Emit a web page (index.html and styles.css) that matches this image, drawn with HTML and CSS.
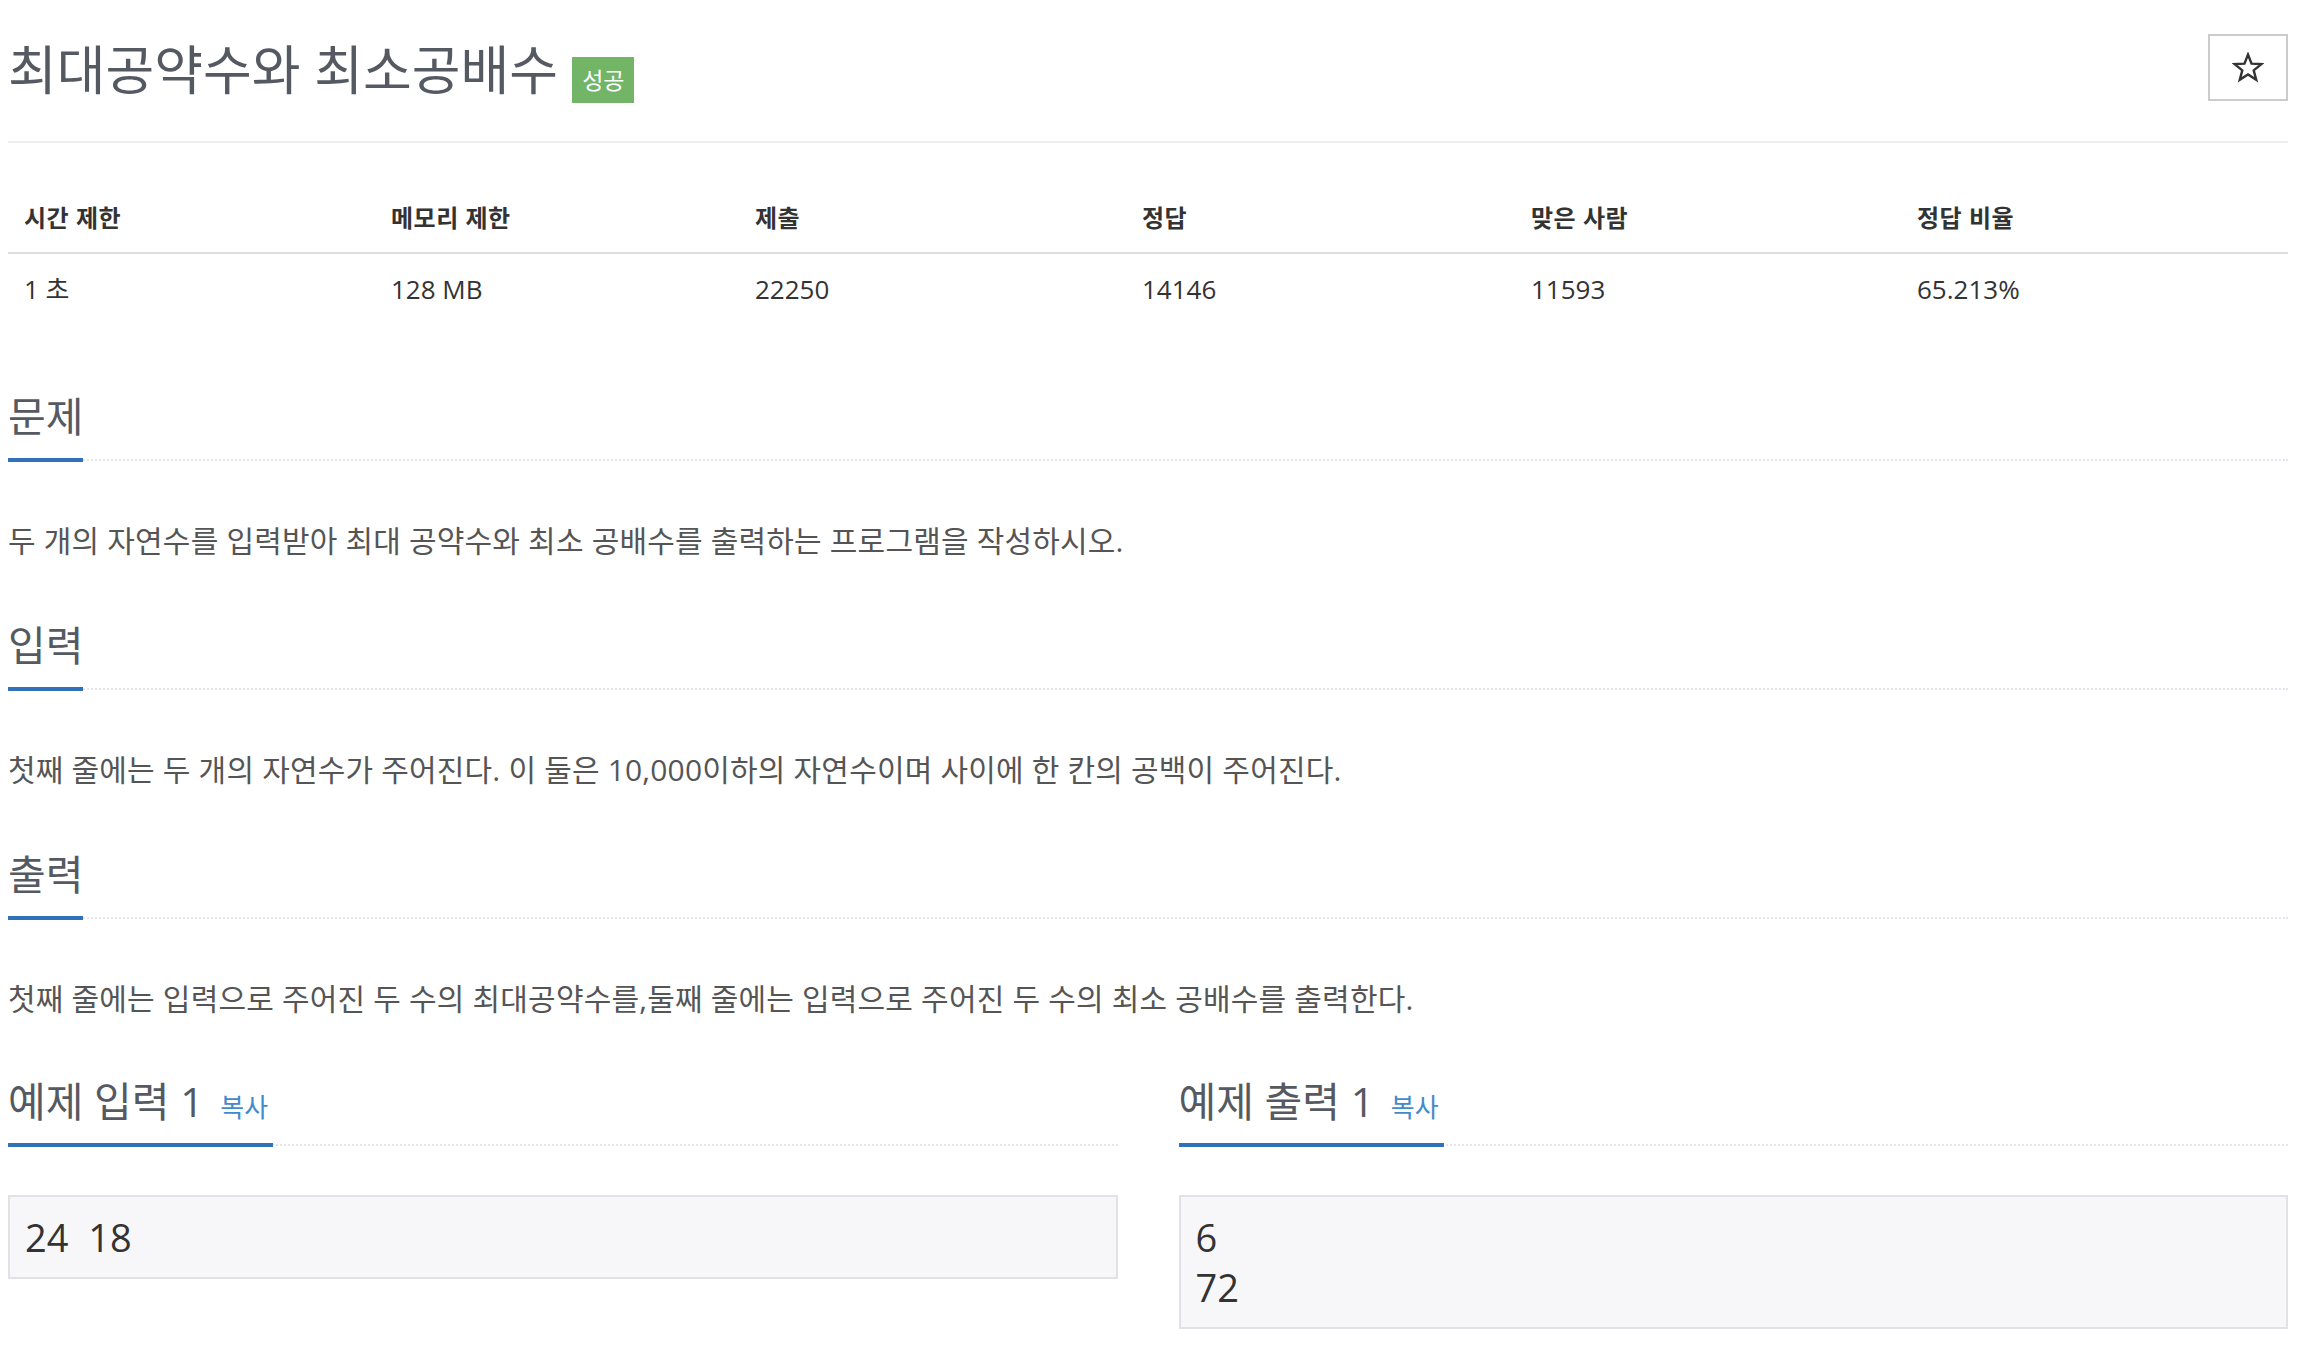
FILE: index.html
```html
<!DOCTYPE html>
<html lang="ko">
<head>
<meta charset="utf-8">
<title>최대공약수와 최소공배수</title>
<link rel="stylesheet" href="styles.css">
</head>
<body>
<div class="page">
  <div class="title-row">
    <h1 class="title"><span class="title-text">최대공약수와 최소공배수</span><span class="badge">성공</span></h1>
    <button class="star-btn" type="button" aria-label="즐겨찾기">
      <svg width="32" height="31" viewBox="-2 -2 32 31" aria-hidden="true">
        <polygon points="14,0.5 17.53,9.65 27.31,10.17 19.71,16.35 22.23,25.83 14,20.5 5.77,25.83 8.29,16.35 0.69,10.17 10.47,9.65" fill="none" stroke="#333" stroke-width="2.4" stroke-linejoin="miter"/>
      </svg>
    </button>
  </div>

  <table class="info">
    <colgroup>
      <col class="c1"><col class="c2"><col class="c3"><col class="c4"><col class="c5"><col class="c6">
    </colgroup>
    <thead>
      <tr><th>시간 제한</th><th>메모리 제한</th><th>제출</th><th>정답</th><th>맞은 사람</th><th>정답 비율</th></tr>
    </thead>
    <tbody>
      <tr><td>1 초</td><td>128 MB</td><td>22250</td><td>14146</td><td>11593</td><td>65.213%</td></tr>
    </tbody>
  </table>

  <section class="sec">
    <div class="headline"><h2>문제</h2></div>
    <p class="desc">두 개의 자연수를 입력받아 최대 공약수와 최소 공배수를 출력하는 프로그램을 작성하시오.</p>
  </section>

  <section class="sec">
    <div class="headline"><h2>입력</h2></div>
    <p class="desc">첫째 줄에는 두 개의 자연수가 주어진다. 이 둘은 10,000이하의 자연수이며 사이에 한 칸의 공백이 주어진다.</p>
  </section>

  <section class="sec">
    <div class="headline"><h2>출력</h2></div>
    <p class="desc">첫째 줄에는 입력으로 주어진 두 수의 최대공약수를,둘째 줄에는 입력으로 주어진 두 수의 최소 공배수를 출력한다.</p>
  </section>

  <div class="samples">
    <section class="sample">
      <div class="headline"><h2>예제 입력 1 <span class="copy">복사</span></h2></div>
      <pre class="sampledata">24 18</pre>
    </section>
    <section class="sample">
      <div class="headline"><h2>예제 출력 1 <span class="copy">복사</span></h2></div>
      <pre class="sampledata">6
72</pre>
    </section>
  </div>
</div>
</body>
</html>
```

FILE: styles.css
```css
html, body {
  margin: 0;
  padding: 0;
  background: #fff;
}

body {
  font-family: "Open Sans", "Noto Sans CJK KR", sans-serif;
  font-kerning: none;
  color: #555;
}

.page {
  margin-left: 8px;
  width: 2280px;
}

/* ---------- title ---------- */
.title-row {
  display: flex;
  justify-content: space-between;
  align-items: flex-start;
  height: 143px;
  box-sizing: border-box;
  border-bottom: 2px solid #eee;
}

.title {
  display: flex;
  align-items: flex-start;
  margin: 43px 0 0;
  font-size: 53px;
  line-height: 53px;
  font-weight: normal;
  color: #555a62;
}

.badge {
  margin-left: 14px;
  margin-top: 14px;
  height: 46px;
  padding: 0 10px;
  display: flex;
  align-items: center;
  background: #72b566;
  color: #fff;
  font-size: 23px;
  line-height: 1;
}

.star-btn {
  margin-top: 34px;
  width: 80px;
  height: 67px;
  box-sizing: border-box;
  border: 2px solid #ccc;
  background: #fff;
  padding: 0;
  display: flex;
  align-items: center;
  justify-content: center;
}

/* ---------- info table ---------- */
.info {
  margin-top: 50px;
  width: 2280px;
  table-layout: fixed;
  border-collapse: separate;
  border-spacing: 0;
  color: #333;
}

.c1 { width: 367px; }
.c2 { width: 364px; }
.c3 { width: 387px; }
.c4 { width: 389px; }
.c5 { width: 386px; }
.c6 { width: 387px; }

.info th {
  text-align: left;
  font-size: 24px;
  font-weight: bold;
  letter-spacing: 0.5px;
  line-height: 30px;
  padding: 10px 16px 19px;
  border-bottom: 2px solid #ddd;
}

.info td {
  text-align: left;
  font-size: 26px;
  line-height: 34px;
  padding: 18px 16px 12px;
}

/* ---------- sections ---------- */
.sec {
  margin-top: 59px;
}

.info + .sec {
  margin-top: 73px;
}

.headline {
  display: flex;
  border-bottom: 2px dotted #e2e6ec;
}

.headline h2 {
  margin: 0 0 -3px;
  padding: 4px 0 21px;
  font-size: 41px;
  line-height: 42px;
  font-weight: normal;
  color: #555a62;
  border-bottom: 4px solid #3071b9;
  white-space: nowrap;
}

.copy {
  margin-left: 6px;
  padding-right: 5px;
  font-size: 26px;
  line-height: 20px;
  color: #428bca;
}

.desc {
  margin: 60px 0 0;
  font-size: 30px;
  line-height: 40px;
  letter-spacing: 0.18px;
  color: #555;
}

/* ---------- samples ---------- */
.samples {
  margin-top: 57px;
  display: grid;
  grid-template-columns: 1fr 1fr;
  column-gap: 61px;
}

.sampledata {
  margin: 49px 0 0;
  padding: 15px;
  border: 2px solid #e1e1e8;
  background: #f7f7f9;
  font-family: "Open Sans", sans-serif;
  font-size: 38px;
  line-height: 50px;
  word-spacing: 10px;
  color: #333;
}
```
